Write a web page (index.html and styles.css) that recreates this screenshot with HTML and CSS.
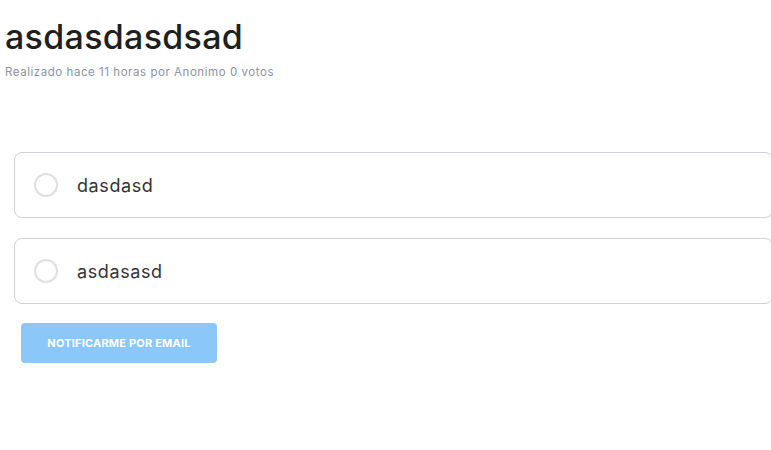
FILE: index.html
```html
<!DOCTYPE html>
<html lang="es">
<head>
<meta charset="utf-8">
<link rel="stylesheet" href="styles.css">
</head>
<body>
<div class="poll">
  <header class="head">
    <h1 class="title">asdasdasdsad</h1>
    <p class="meta">Realizado hace 11 horas por Anonimo 0 votos</p>
  </header>
  <div class="options">
    <label class="option"><span class="radio"></span><span class="label">dasdasd</span></label>
    <label class="option"><span class="radio"></span><span class="label">asdasasd</span></label>
  </div>
  <button class="notify">NOTIFICARME POR EMAIL</button>
</div>
</body>
</html>
```
FILE: styles.css
```css
html, body { margin: 0; padding: 0; background: #fff; }
body { font-family: Inter, "Noto Sans", sans-serif; color: #222; width: 771px; overflow: hidden; }
.poll { padding: 17px 0 0 5px; }
.title { margin: 0; font-size: 34px; font-weight: 500; letter-spacing: 0.3px; line-height: 40px; color: #1f1f1f; }
.meta { margin: 8px 0 0; font-size: 11.5px; letter-spacing: 0.55px; color: #8c93a3; line-height: 14px; }
.options { margin: 73px 0 0 9px; display: flex; flex-direction: column; gap: 20px; }
.option { display: flex; align-items: center; border: 1.5px solid #cfd0dc; border-radius: 8px; margin-right: -2px; box-sizing: border-box; height: 66px; padding-left: 19px; }
.radio { width: 20px; height: 20px; border: 2px solid #e0e0e0; border-radius: 50%; flex: none; }
.label { margin-left: 19px; font-size: 18px; letter-spacing: 0.6px; color: #333; }
.notify { margin: 19px 0 0 16px; width: 196px; height: 40px; border: 0; border-radius: 4px; background: #8cc7fa; color: #fff; font-family: Inter, sans-serif; font-size: 11px; font-weight: 700; letter-spacing: 0.2px; padding: 0; display: block; }
```
